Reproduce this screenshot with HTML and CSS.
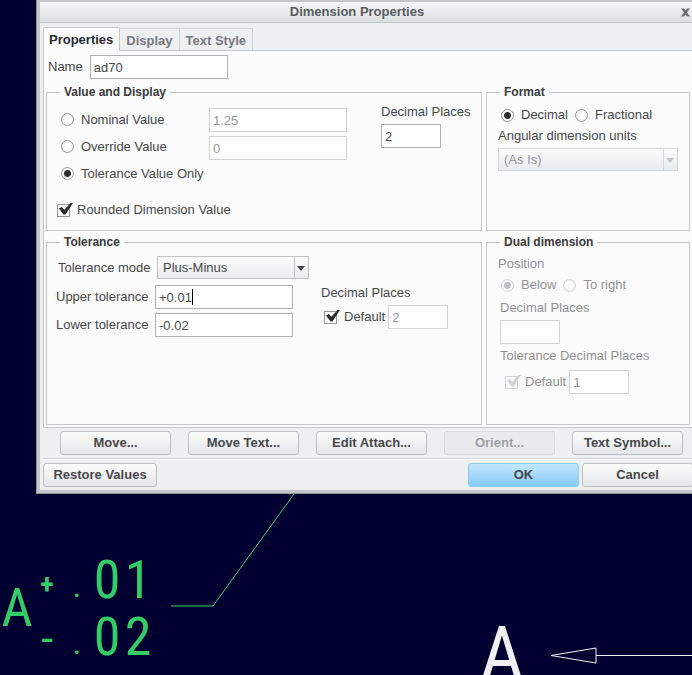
FILE: index.html
```html
<!DOCTYPE html>
<html lang="en">
<head>
  <meta charset="UTF-8">
  <meta name="viewport" content="width=device-width, initial-scale=1.0">
  <title>Dimension Properties</title>
  <link rel="stylesheet" href="styles.css">
</head>
<body>
<form class="dialog" onsubmit="return false">
  <header class="title-bar">
    <h1>Dimension Properties</h1>
    <button type="button" class="close" aria-label="Close">
      <svg width="9" height="9" viewBox="0 0 9 9"><path d="M0 .5h3L4.500 2.500 6 .5h3L6 4.500l3 4H6L4.500 6.500 3 8.500H0l3-4z" fill="#6b6d70"/></svg>
    </button>
  </header>

  <nav class="tabs">
    <button type="button" class="tab active">Properties</button>
    <button type="button" class="tab">Display</button>
    <button type="button" class="tab">Text Style</button>
  </nav>

  <main class="pane">
    <div class="name-row">
      <label for="name">Name</label>
      <input type="text" id="name" value="ad70">
    </div>

    <div class="groups">
      <fieldset>
        <legend>Value and Display</legend>
        <div class="value-fields">
          <div class="value-modes">
            <label><input type="radio" name="mode">Nominal Value</label>
            <label><input type="radio" name="mode">Override Value</label>
            <label><input type="radio" name="mode" checked>Tolerance Value Only</label>
          </div>
          <div class="value-inputs">
            <input type="text" value="1.25" aria-label="Nominal Value" disabled>
            <input type="text" value="0" aria-label="Override Value" disabled>
          </div>
          <div class="value-places">
            <label for="places">Decimal Places</label>
            <input type="text" class="short" id="places" value="2">
          </div>
        </div>
        <label class="rounded"><input type="checkbox" checked>Rounded Dimension Value</label>
      </fieldset>

      <fieldset class="format">
        <legend>Format</legend>
        <div class="radio-row">
          <label><input type="radio" name="format" checked>Decimal</label>
          <label><input type="radio" name="format">Fractional</label>
        </div>
        <label for="units">Angular dimension units</label>
        <div class="select">
          <select id="units" disabled><option>(As Is)</option></select>
        </div>
      </fieldset>

      <fieldset>
        <legend>Tolerance</legend>
        <div class="mode-row">
          <label for="tol-mode">Tolerance mode</label>
          <div class="select">
            <select id="tol-mode"><option>Plus-Minus</option></select>
          </div>
        </div>
        <div class="tolerances">
          <div class="tolerance-grid">
            <label for="upper">Upper tolerance</label>
            <div class="editing"><input type="text" id="upper" value="+0.01"><span class="caret"></span></div>
            <label for="lower">Lower tolerance</label>
            <input type="text" id="lower" value="-0.02">
          </div>
          <div class="tolerance-places">
            <label for="tol-places">Decimal Places</label>
            <div class="default-row">
              <label><input type="checkbox" checked>Default</label>
              <input type="text" class="short" id="tol-places" value="2" disabled>
            </div>
          </div>
        </div>
      </fieldset>

      <fieldset class="dual">
        <legend>Dual dimension</legend>
        <div class="position">Position</div>
        <div class="radio-row">
          <label><input type="radio" name="position" checked disabled>Below</label>
          <label><input type="radio" name="position" disabled>To right</label>
        </div>
        <div class="dual-places">
          <label for="dual-places">Decimal Places</label>
          <input type="text" class="short" id="dual-places" disabled>
          <label for="dual-tol-places">Tolerance Decimal Places</label>
          <div class="default-row">
            <label><input type="checkbox" checked disabled>Default</label>
            <input type="text" class="short" id="dual-tol-places" value="1" disabled>
          </div>
        </div>
      </fieldset>
    </div>
  </main>

  <div class="actions">
    <button type="button" class="btn">Move...</button>
    <button type="button" class="btn">Move Text...</button>
    <button type="button" class="btn">Edit Attach...</button>
    <button type="button" class="btn" disabled>Orient...</button>
    <button type="button" class="btn">Text Symbol...</button>
  </div>

  <footer class="footer">
    <button type="button" class="btn restore">Restore Values</button>
    <button type="submit" class="btn primary">OK</button>
    <button type="button" class="btn">Cancel</button>
  </footer>
</form>

<svg class="drawing">
  <!-- leader line -->
  <path class="leader" d="M294 0L213 112H171"/>
  <!-- dimension with its tolerances -->
  <g class="dimension">
    <text x="17" y="132">A</text>
    <text class="sign" x="47" y="100">+</text>
    <text x="77" y="103" class="point">.</text>
    <text x="107" y="104">0</text>
    <text x="138" y="104">1</text>
    <text class="sign" x="47" y="156">−</text>
    <text x="77" y="160" class="point">.</text>
    <text x="107" y="161">0</text>
    <text x="138" y="161">2</text>
  </g>
  <!-- datum and arrow -->
  <text class="datum" x="502" y="186">A</text>
  <path class="arrow" d="M551 161.500L596 154V169L551 161.500M596 161.500H3000"/>
</svg>
</body>
</html>
```
FILE: styles.css
```css
* {
  box-sizing: border-box;
}
body {
  margin: 0;
  min-height: 100vh;
  display: flex;
  flex-direction: column;
  overflow: hidden;
  background-color: #000030;
  color: #48484a;
  font-family: "Liberation Sans", Arial, sans-serif;
  font-size: 13px;
  line-height: 16px;
}
button, input, select {
  font: inherit;
  color: inherit;
  margin: 0;
}

/* window frame, runs off the right edge */
.dialog {
  margin: 0 -8px 0 36px;
  border: 1px solid #929598;
  border-top: 0;
  box-shadow: inset 0 0 0 3px #c3c7ca;
  padding: 2px 3px 3px;
  background-color: #edeff1;
}
.title-bar {
  display: flex;
  align-items: center;
  height: 21px;
  border-bottom: 1px solid #c3c7ca;
  background: linear-gradient(#f5f6f7, #dcdfe1);
  position: relative;
}
.title-bar h1 {
  flex: 1;
  margin: 0;
  font-size: 13px;
  text-align: center;
  color: #5a5c60;
}
.close {
  width: 22px;
  height: 20px;
  padding: 0;
  border: 0;
  background: none;
  display: flex;
  align-items: center;
  justify-content: center;
}

.tabs {
  display: flex;
  align-items: flex-end;
  height: 27px;
  padding-left: 3px;
}
.tab {
  height: 22px;
  padding: 2px 6px 0;
  border: 1px solid #d0d3d6;
  border-left: 0;
  border-bottom: 0;
  background-color: #edeff1;
  color: #77797d;
  font-weight: bold;
}
.tab.active {
  height: 24px;
  margin-bottom: -1px;
  padding: 1px 6px 0 5px;
  border: 1px solid #c3c7ca;
  border-bottom: 0;
  border-radius: 2px 2px 0 0;
  background-color: #fbfbfb;
  color: #2c2c2e;
  position: relative;
}

.pane {
  margin: 0 3px;
  padding: 4px 2px 2px;
  border: 1px solid #c3c7ca;
  background-color: #fbfbfb;
}
.name-row {
  display: flex;
  align-items: center;
  gap: 7px;
  padding-left: 2px;
  margin-bottom: 5px;
}
.groups {
  display: grid;
  grid-template-columns: 436fr 204fr;
  grid-template-rows: 147px 191px;
  gap: 3px 4px;
}
fieldset {
  min-width: 0;
  margin: 0;
  padding: 0;
  border: 1px solid #c3c7ca;
}
legend {
  margin-left: 13px;
  padding: 0 4px;
  font-size: 12px;
  font-weight: bold;
  color: #3a3a3c;
}

input[type="text"] {
  display: block;
  width: 138px;
  height: 24px;
  padding: 1px 3px 0;
  border: 1px solid #aeb0b3;
  border-radius: 0;
  background-color: #fff;
}
input[type="text"].short {
  width: 60px;
}
input[type="text"]:disabled {
  border-color: #d0d2d5;
  color: #98989a;
}

input[type="radio"], input[type="checkbox"] {
  appearance: none;
  flex: none;
  width: 13px;
  height: 13px;
  margin-right: 7px;
  border: 1px solid #98999c;
  background-color: #fff;
}
input[type="radio"] {
  border-radius: 50%;
  background: radial-gradient(#fff 45%, #dedfe1);
}
input[type="radio"]:checked {
  background: radial-gradient(circle at 50% 50%, #2c2c2e 0 3px, #fff 4px);
}
input[type="radio"]:disabled {
  border-color: #d0d2d5;
}
input[type="radio"]:checked:disabled {
  background: radial-gradient(circle at 50% 50%, #c0c1c3 0 3px, #fff 4px);
}
input[type="checkbox"] {
  position: relative;
}
input[type="checkbox"]:checked::after {
  content: "";
  position: absolute;
  left: 1px;
  top: -2px;
  width: 14px;
  height: 12px;
  background-color: #2c2c2e;
  clip-path: polygon(0 50%, 20% 38%, 38% 60%, 86% 0, 100% 5%, 46% 100%, 32% 100%);
}
input[type="checkbox"]:disabled {
  border-color: #d0d2d5;
}
input[type="checkbox"]:checked:disabled::after {
  background-color: #d0d2d5;
}
label:has(input) {
  display: flex;
  align-items: center;
}

.select {
  position: relative;
}
.select select {
  appearance: none;
  display: block;
  width: 100%;
  height: 23px;
  padding: 0 20px 0 5px;
  border: 1px solid #c0c3c6;
  border-radius: 0;
  background: linear-gradient(#fbfbfb, #e9ebed);
  opacity: 1;
}
.select::before {
  content: "";
  position: absolute;
  right: 14px;
  top: 0;
  width: 1px;
  height: 23px;
  background-color: #c0c3c6;
}
.select::after {
  content: "";
  position: absolute;
  right: 4px;
  top: 10px;
  border: 4px solid transparent;
  border-top: 5px solid #48484a;
  border-bottom: 0;
}
.format .select select {
  border-color: #d5d8da;
  color: #98989a;
}
.format .select::before {
  background-color: #d5d8da;
}
.format .select::after {
  border-top-color: #c0c3c6;
}

/* Value and Display */
.value-fields {
  display: flex;
  padding-left: 14px;
}
.value-modes {
  width: 148px;
  padding-top: 6px;
}
.value-modes label {
  height: 27px;
}
.value-inputs {
  display: flex;
  flex-direction: column;
  gap: 4px;
  padding-top: 8px;
}
.value-places {
  display: flex;
  flex-direction: column;
  gap: 4px;
  margin-left: 34px;
  padding-top: 4px;
}
.rounded {
  margin: 15px 0 0 10px;
}

/* Format and Dual dimension */
.radio-row {
  display: flex;
  gap: 7px;
  padding-left: 3px;
}
.format {
  padding: 0 11px;
}
.format legend, .dual legend {
  margin-left: 2px;
}
.format .radio-row {
  margin: 7px 0 5px;
}
.format .select {
  margin-top: 4px;
}
.dual {
  padding: 0 11px;
  color: #929294;
}
.position {
  margin-top: 6px;
}
.dual .radio-row {
  margin: 5px 0 7px;
}
.dual-places {
  display: flex;
  flex-direction: column;
  gap: 4px;
  padding-left: 2px;
}
.default-row {
  display: flex;
  gap: 3px;
  padding-left: 3px;
}
.dual-places .default-row {
  margin-top: 2px;
  padding-left: 5px;
}

/* Tolerance */
.mode-row {
  display: flex;
  align-items: center;
  padding: 6px 0 6px 11px;
}
.mode-row label {
  width: 99px;
}
.mode-row .select {
  width: 152px;
}
.tolerances {
  display: flex;
  gap: 28px;
  padding-left: 9px;
}
.tolerance-grid {
  display: grid;
  grid-template-columns: 99px 138px;
  gap: 4px 0;
  align-items: center;
}
.tolerance-places {
  display: flex;
  flex-direction: column;
  gap: 4px;
}
.editing {
  position: relative;
}
.caret {
  position: absolute;
  left: 37px;
  top: 4px;
  width: 1px;
  height: 16px;
  background-color: #000;
}

.btn {
  width: 111px;
  height: 24px;
  padding: 0;
  border: 1px solid #bdc0c3;
  border-radius: 3px;
  background: linear-gradient(#fbfbfb, #e6e7e9);
  font-weight: bold;
}
.btn:disabled {
  border-color: #d8dadc;
  background: #e9ebec;
  color: #a0a0a2;
}
.btn.primary {
  border-color: #8ccbf2;
  background: linear-gradient(#c3e6fb, #84cbf8);
}
.btn.restore {
  width: 114px;
  margin-right: auto;
}
.actions {
  display: flex;
  gap: 17px;
  margin: 0 3px;
  padding: 3px 0 3px 17px;
  border-bottom: 1px solid #d0d3d6;
}
.footer {
  display: flex;
  gap: 3px;
  margin: 0 3px;
  padding: 3px 0;
  border-top: 1px solid #fff;
}

/* model view behind the dialog */
.drawing {
  display: block;
  flex: 1;
  width: 100%;
  min-height: 0;
  font-family: "Roboto Condensed", "Noto Sans CJK SC", sans-serif;
  font-size: 54px;
  text-anchor: middle;
}
.leader {
  fill: none;
  stroke: #33cc66;
}
.dimension {
  fill: #33cc66;
}
.sign {
  font-size: 28px;
  font-weight: bold;
}
.point {
  font-size: 32px;
}
.datum {
  font-size: 76px;
  fill: #f0f0f4;
}
.arrow {
  fill: none;
  stroke: #f0f0f4;
}
```
